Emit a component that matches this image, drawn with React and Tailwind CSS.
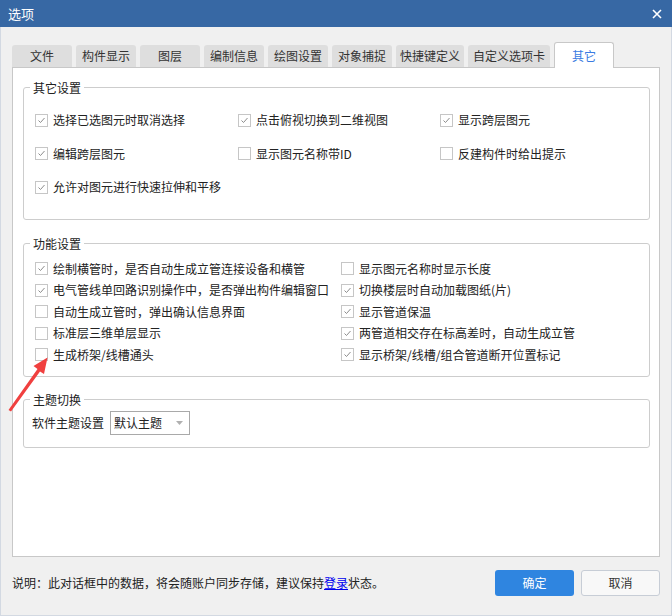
import React from "react";

const tabs = [
  { label: "文件", w: "w-[60px]" },
  { label: "构件显示", w: "w-[60px]" },
  { label: "图层", w: "w-[60px]" },
  { label: "编制信息", w: "w-[60px]" },
  { label: "绘图设置", w: "w-[60px]" },
  { label: "对象捕捉", w: "w-[60px]" },
  { label: "快捷键定义", w: "w-[68px]" },
  { label: "自定义选项卡", w: "w-[82px]" },
];

const other = [
  ["选择已选图元时取消选择", true],
  ["点击俯视切换到二维视图", true],
  ["显示跨层图元", true],
  ["编辑跨层图元", true],
  ["显示图元名称带ID", false],
  ["反建构件时给出提示", false],
  ["允许对图元进行快速拉伸和平移", true],
];

const func = [
  ["绘制横管时，是否自动生成立管连接设备和横管", true],
  ["显示图元名称时显示长度", false],
  ["电气管线单回路识别操作中，是否弹出构件编辑窗口", true],
  ["切换楼层时自动加载图纸(片)", true],
  ["自动生成立管时，弹出确认信息界面", false],
  ["显示管道保温", true],
  ["标准层三维单层显示", false],
  ["两管道相交存在标高差时，自动生成立管", true],
  ["生成桥架/线槽通头", false],
  ["显示桥架/线槽/组合管道断开位置标记", true],
];

function Check({ on }) {
  return (
    <span className="w-[13px] h-[13px] border border-[#c6c6c6] bg-white flex items-center justify-center shrink-0">
      {on && (
        <svg width="9" height="9" viewBox="0 0 9 9">
          <polyline points="1.5,4.5 3.5,6.5 7.5,2" fill="none" stroke="#8c8c8c" strokeWidth="1" />
        </svg>
      )}
    </span>
  );
}

function Item({ label, on, h }) {
  return (
    <div className={"flex items-center gap-[5px] " + h}>
      <Check on={on} />
      <span className="text-[12px] leading-[16px] text-[#222] whitespace-nowrap">{label}</span>
    </div>
  );
}

function Group({ title, className, children }) {
  return (
    <fieldset className={"border border-[#cdcdcd] rounded-[3px] pl-[6px] pr-0 " + className}>
      <legend className="px-[3px] text-[12px] leading-[17px] text-[#222]">{title}</legend>
      {children}
    </fieldset>
  );
}

export default function App() {
  return (
    <div
      className="w-[672px] h-[616px] bg-[#f0f0f0] flex flex-col relative overflow-hidden"
      style={{ fontFamily: '"Microsoft YaHei", "Noto Sans CJK SC", sans-serif' }}
    >
      {/* title bar */}
      <div className="h-[27px] bg-[#3768a4] flex items-center justify-between pl-[8px] pr-[10px] shrink-0">
        <span className="text-white text-[13px] leading-[16px]">选项</span>
        <svg width="10" height="10" viewBox="0 0 10 10">
          <path d="M1 1L9 9M9 1L1 9" stroke="#fff" strokeWidth="1.6" />
        </svg>
      </div>

      <div className="flex-1 flex flex-col border-x border-b border-[#d3d9e2]">
        {/* tabs */}
        <div className="flex items-end gap-[4px] pl-[11px] pt-[15px] h-[40px] shrink-0">
          {tabs.map((t) => (
            <div
              key={t.label}
              className={t.w + " h-[22px] bg-[#dedede] rounded-t-[3px] flex items-center justify-center text-[12px] text-[#333]"}
            >
              {t.label}
            </div>
          ))}
          <div className="w-[60px] h-[26px] bg-white border border-[#c8c8c8] border-b-0 rounded-t-[3px] flex items-center justify-center text-[12px] text-[#3a7be2] relative z-10 -mb-px">
            其它
          </div>
        </div>

        {/* panel */}
        <div className="ml-[11px] w-[648px] h-[490px] bg-white border border-[#c8c8c8] px-[10px] pt-[11px] shrink-0">
          <Group title="其它设置" className="w-[627px] pb-[22px]">
            <div className="grid grid-cols-[203px_202px_1fr] gap-y-[13.5px] pl-[5px] pt-[14px]">
              {other.map(([l, on]) => (
                <Item key={l} label={l} on={on} h="h-[20px]" />
              ))}
            </div>
          </Group>

          <Group title="功能设置" className="w-[627px] mt-[15px] pb-[10px]">
            <div className="grid grid-cols-[306px_1fr] pl-[5px] pt-[6px]">
              {func.map(([l, on]) => (
                <Item key={l} label={l} on={on} h="h-[21.5px]" />
              ))}
            </div>
          </Group>

          <Group title="主题切换" className="w-[627px] mt-[14px] pb-[12px]">
            <div className="flex items-center gap-[6px] pl-[2px] pt-[3px]">
              <span className="text-[12px] leading-[16px] text-[#222]">软件主题设置</span>
              <div className="w-[80px] h-[24px] border border-[#a9a9a9] bg-white flex items-center justify-between pl-[3px] pr-[6px]">
                <span className="text-[12px] leading-[16px] text-[#222]">默认主题</span>
                <svg width="7" height="4" viewBox="0 0 7 4">
                  <path d="M0 0H7L3.5 4Z" fill="#b0b0b0" />
                </svg>
              </div>
            </div>
          </Group>
        </div>

        {/* footer */}
        <div className="flex items-center justify-between pl-[11px] pr-[11px] mt-[13px]">
          <span className="text-[12px] leading-[16px] text-[#222]">
            说明：此对话框中的数据，将会随账户同步存储，建议保持
            <span className="text-[#0000ee] underline">登录</span>
            状态。
          </span>
          <div className="flex gap-[7px]">
            <button className="w-[79px] h-[26px] bg-[#2f85e0] rounded-[3px] text-white text-[12px]">确定</button>
            <button className="w-[79px] h-[26px] bg-[#f8f8f8] border border-[#c7cdd6] rounded-[3px] text-[#333] text-[12px]">取消</button>
          </div>
        </div>
      </div>

      {/* red annotation arrow */}
      <svg className="absolute left-0 top-0 pointer-events-none" width="672" height="616">
        <polygon
          points="8.5,410 11,411.5 40,371.5 44,374 47.5,357.5 33.5,366 37.5,369"
          fill="#f0403f"
        />
      </svg>
    </div>
  );
}
